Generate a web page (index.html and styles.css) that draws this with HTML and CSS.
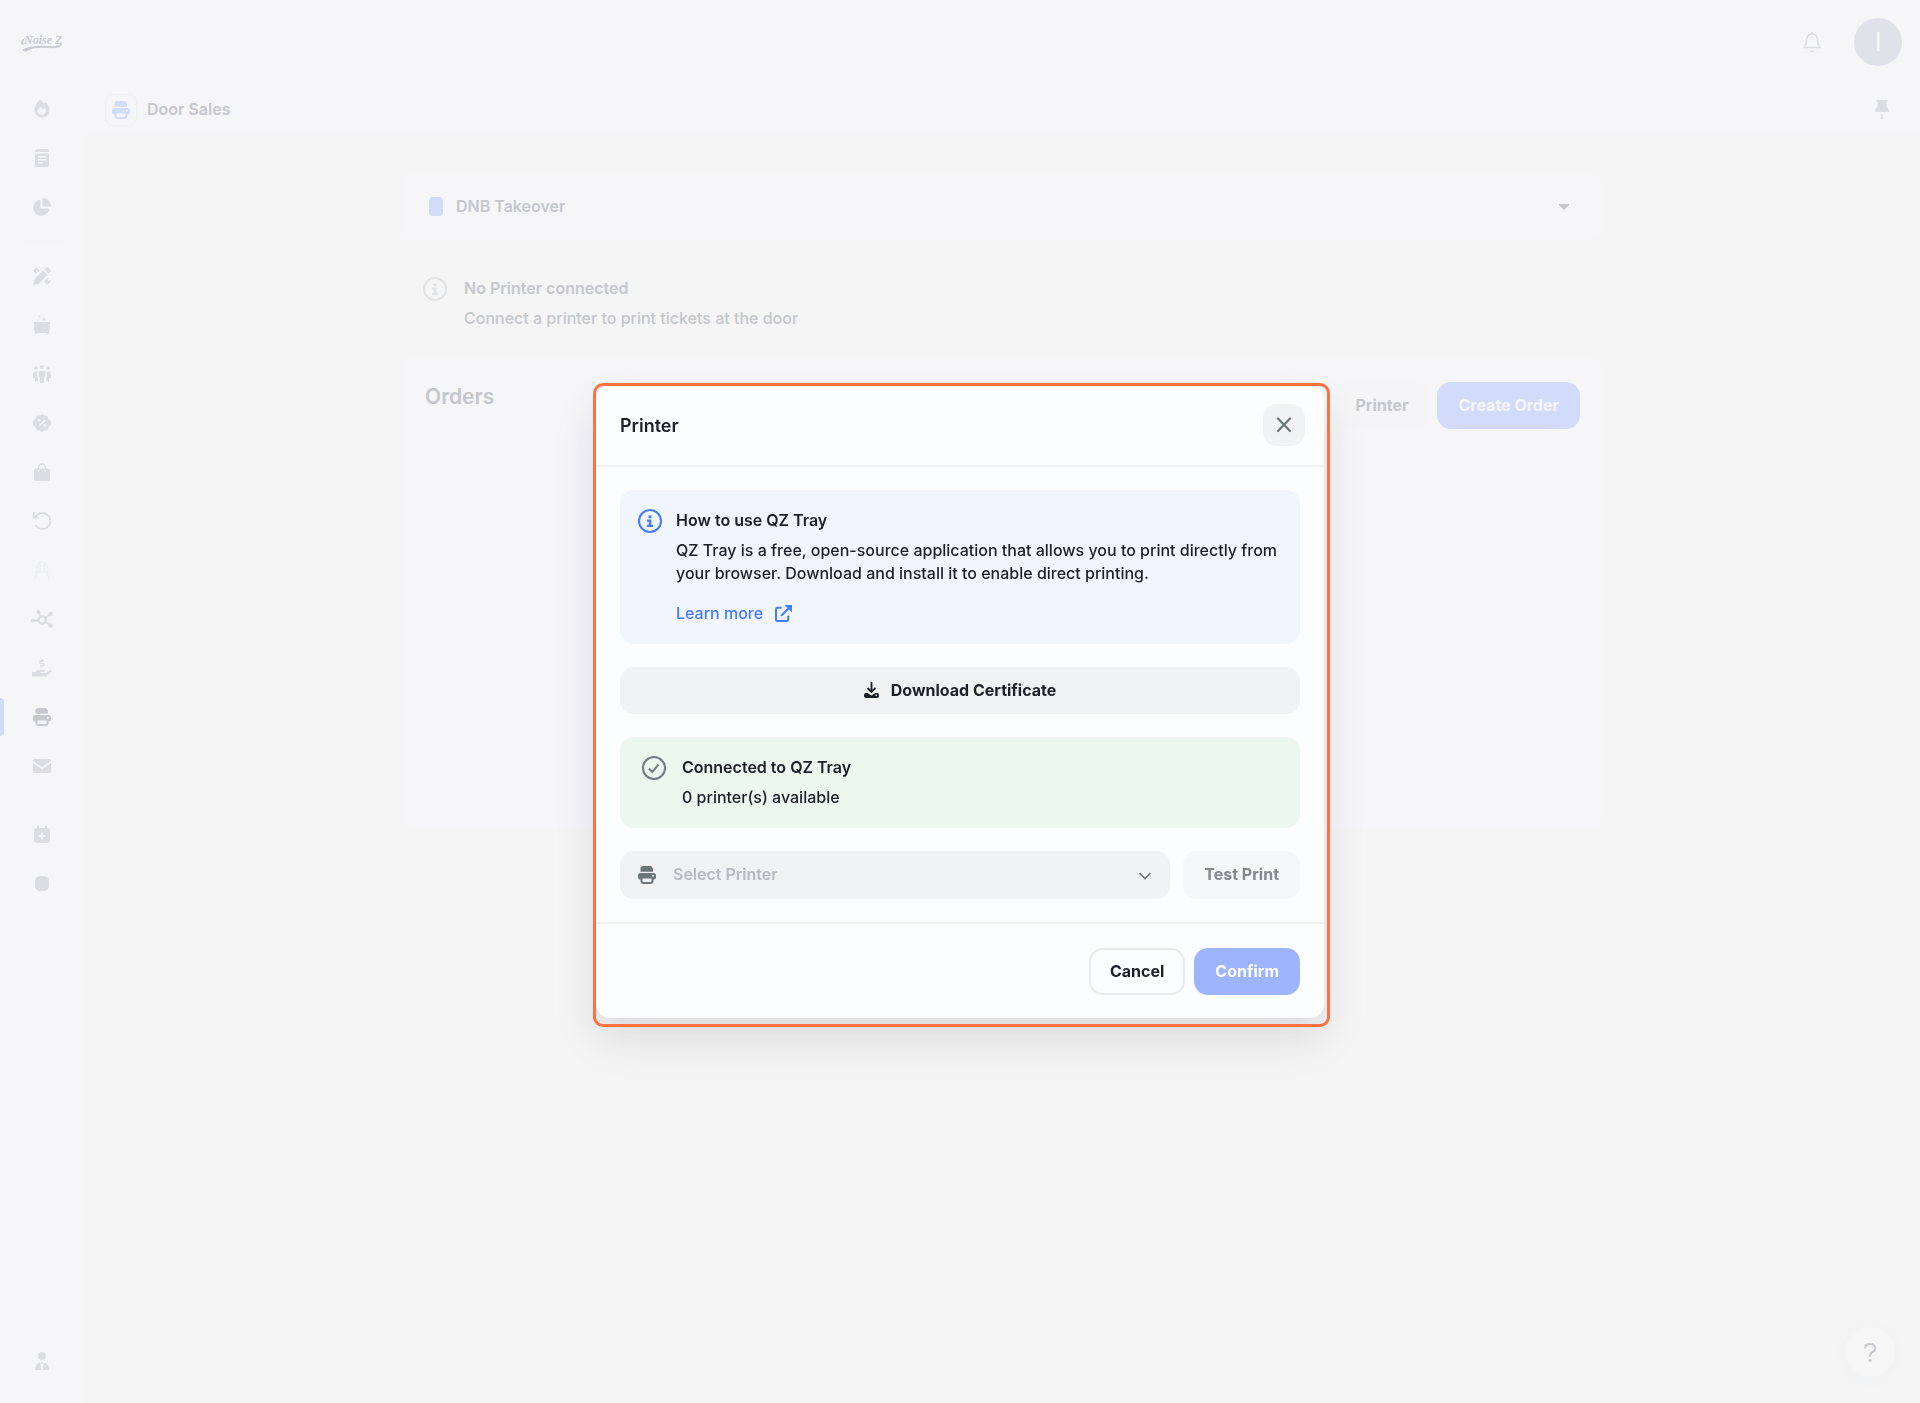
FILE: index.html
```html
<!DOCTYPE html>
<html lang="en">
<head>
  <meta charset="UTF-8" />
  <meta name="viewport" content="width=device-width, initial-scale=1.0"/>
  <title>Door Sales</title>
  <link rel="stylesheet" href="styles.css">
</head>
<body>

  <!-- shared icons -->
  <svg class="sprite" aria-hidden="true">
    <symbol id="i-printer" viewBox="0 0 18 18">
      <path d="M5 0h7.500q1.500 0 2.500 3v2.800H2.500V2.500Q2.500 0 5 0z"/>
      <path fill-rule="evenodd" d="M2.500 7h13Q18 7 18 9.500v2q0 2-2 2h-.5V15q0 3-3 3h-7q-3 0-3-3v-1.500H2q-2 0-2-2v-2Q0 7 2.500 7zM4.500 12.500V15q0 1 1 1h7q1 0 1-1v-2.500zM14 9h2v1.500h-2z"/>
    </symbol>
    <symbol id="i-info" viewBox="0 0 24 24">
      <circle cx="12" cy="12" r="11" fill="none" stroke="currentColor" stroke-width="2"/>
      <path d="M10.500 6.500h3v2.700h-3zM9 10.500h4.300v5.300H15V18H9v-2.200h1.800v-3.100H9z"/>
    </symbol>
  </svg>

  <div class="layout">
    <nav class="sidebar">
      <a href="#" class="logo" aria-label="Noise Z">
        <svg width="44" height="22" viewBox="0 0 44 22">
          <text x="4" y="13" class="logo-text">Noise Z</text>
          <path d="M2 14q-3-4 3-7-3 4-1 6zM2 19q8-5 26-4 13 1 14-4 1 7-12 6-15-1-21 2-4 3-7 0z" fill="#c9cbd0"/>
        </svg>
      </a>

      <a href="#" class="nav-item" aria-label="Dashboard">
        <svg width="16" height="19" viewBox="0 0 18 20"><path fill-rule="evenodd" d="M7 0q3 2 4.500 5L13 3q5 5 4.500 9.500Q16.500 20 9 20 1 19.500.5 12 .5 6 7 0zM8 8q-4 2-4 5.500Q4.500 17 9 17q4.500-.5 4.500-4.500Q13.500 10 12 8.500L10.500 11z"/></svg>
      </a>
      <a href="#" class="nav-item" aria-label="Events">
        <svg width="14" height="18" viewBox="0 0 14 18"><path d="M2 0h10q1.500 0 2 3H0Q.5 0 2 0z"/><path fill-rule="evenodd" d="M0 4.500h14V16q0 2-2 2H2q-2 0-2-2zM3 7v1.500h8V7zm0 3v1.500h8V10zm0 3v1.500h5V13z"/></svg>
      </a>
      <a href="#" class="nav-item" aria-label="Reports">
        <svg width="18" height="18" viewBox="0 0 18 18"><path d="M7.500 1.500V10.500H16.500A8.200 8.200 0 1 1 7.500 1.500zM9.500 0a8.200 8.200 0 0 1 8.500 8.500H9.500z"/></svg>
      </a>

      <hr>

      <a href="#" class="nav-item" aria-label="Design">
        <svg width="18" height="18" viewBox="0 0 18 18"><path d="M0 18l1.500-6L10 3.500 14.500 8 6 16.500zM11.500 2.500L14 0q2 0 4 4l-2.500 2.500zM0 3.500L3.500 0l3.500 3.500-1.500 1.500L3.500 3 2.500 4l2 2L3 7zM11 14.500l4-4 1 1-1.500 1.500 1 1L17 12.500l1 1.500-4 4z"/></svg>
      </a>
      <a href="#" class="nav-item" aria-label="Kitchen">
        <svg width="16" height="20" viewBox="0 0 16 20"><circle cx="5.500" cy="1.500" r="1"/><circle cx="10" cy="4" r="1.500"/><path d="M0 7h16v2l-.5 1q1 4-.5 7.500V19h-2v-1H3v1H1v-1.500Q-.5 14 .5 10L0 9z"/></svg>
      </a>
      <a href="#" class="nav-item" aria-label="Guests">
        <svg width="18" height="18" viewBox="0 0 18 18"><circle cx="3" cy="3" r="1.800"/><circle cx="9" cy="2" r="2"/><circle cx="15" cy="3" r="1.800"/><path d="M6.500 6h5q1 0 1 1.500V12h-1.500v6H7v-6H5.500V7.500Q5.500 6 6.500 6zM2 6.500h2.500q-1 3 0 6l.5 4H2V13H0q-.5-6 2-6.500zM16 6.500h-2.500q1 3 0 6l-.5 4h3V13h2q.5-6-2-6.500z"/></svg>
      </a>
      <a href="#" class="nav-item" aria-label="Discounts">
        <svg width="18" height="18" viewBox="0 0 18 18"><path d="M9 0l2.500 1.500 3 .5.8 2.800L18 7v4l-2.500 2-1 3-3 .5L9 18l-2.500-1.500-3-.5-1-3L0 11V7l2.500-2.200L3.500 2l3-.5z"/><path d="M6 12l6-6" stroke="#f6f6f9" stroke-width="1.500"/><circle cx="6" cy="6.500" r="1.400" fill="#f6f6f9"/><circle cx="12" cy="11.500" r="1.400" fill="#f6f6f9"/></svg>
      </a>
      <a href="#" class="nav-item" aria-label="Shop">
        <svg width="16" height="18" viewBox="0 0 16 18"><path d="M4.500 6V4.500a3.500 3.500 0 0 1 7 0V6" fill="none" stroke="currentColor" stroke-width="1.500"/><path fill-rule="evenodd" d="M2 5.500h12q2 0 2 2V16q0 2-2 2H2q-2 0-2-2V7.500q0-2 2-2zM4 7v1.500h1.500V7zm6.500 0v1.500H12V7z"/></svg>
      </a>
      <a href="#" class="nav-item" aria-label="Refunds">
        <svg width="18" height="18" viewBox="0 0 18 18"><path d="M2.500 5A8 8 0 1 1 2.500 13" fill="none" stroke="currentColor" stroke-width="1.800"/><path d="M0 0h1.800v3.500L6 5v1.500H0z"/></svg>
      </a>
      <a href="#" class="nav-item nav-item-faint" aria-label="Seating">
        <svg width="16" height="18" viewBox="0 0 16 18"><path d="M3 10V6q0-5 5-5t5 5v4M6 10V1.500M10 10V1.500M1 11h14M3 12l-2 6M13 12l2 6" fill="none" stroke="currentColor" stroke-width="1.500"/></svg>
      </a>
      <a href="#" class="nav-item" aria-label="Integrations">
        <svg width="22" height="18" viewBox="0 0 22 18"><path d="M2 10.500h6M7.500 2.500l2.500 5M19 4.500l-5.500 4M19 15l-5.500-4" stroke="currentColor" stroke-width="2"/><circle cx="11.300" cy="10" r="3.700" fill="none" stroke="currentColor" stroke-width="2.500"/><circle cx="2" cy="10.500" r="2"/><circle cx="7.500" cy="2" r="2"/><circle cx="19.500" cy="4" r="2.200"/><circle cx="19.500" cy="15.500" r="2.200"/></svg>
      </a>
      <a href="#" class="nav-item" aria-label="Payouts">
        <svg width="20" height="18" viewBox="0 0 20 18"><path d="M12 2H9.500q-1.500 0-1.500 1.200T9.500 4.500h1q1.500 0 1.500 1.200T10.500 7H8M10 0v2M10 7v1.500" fill="none" stroke="currentColor" stroke-width="1.400"/><path d="M0 13h3q2-2 4-2h5q1.500.5.5 2H9v1h4.500l5-3q2 0 1 1.500L14 17.500H0z"/></svg>
      </a>
      <a href="#" class="nav-item active" aria-label="Door Sales">
        <svg width="18" height="18"><use href="#i-printer"/></svg>
      </a>
      <a href="#" class="nav-item" aria-label="Messages">
        <svg width="18" height="14" viewBox="0 0 18 14"><path d="M1.500 0h15Q18 0 18 2L9 8 0 2Q0 0 1.500 0zM0 4l9 6 9-6v8q0 2-2 2H2q-2 0-2-2z"/></svg>
      </a>

      <hr>

      <a href="#" class="nav-item" aria-label="Add event">
        <svg width="16" height="17" viewBox="0 0 16 17"><path fill-rule="evenodd" d="M3 0h2v2h6V0h2v2q3 0 3 3v9q0 3-3 3H3q-3 0-3-3V5q0-3 3-3zM7 6.500V9H4.500v2H7v2.500h2V11h2.500V9H9V6.500z"/></svg>
      </a>
      <a href="#" class="nav-item" aria-label="More">
        <svg width="14" height="15" viewBox="0 0 14 15"><rect width="14" height="15" rx="5"/></svg>
      </a>

      <a href="#" class="nav-item nav-user" aria-label="Account">
        <svg width="14" height="18" viewBox="0 0 14 18"><circle cx="7" cy="4" r="4"/><path d="M5 10.500Q0 12 0 18h6l-.5-6zM9 10.500q5 1.500 5 7.500H8l.5-6zM6 10h2l-.5 2h-1z"/></svg>
      </a>
    </nav>

    <div class="page">
      <header class="topbar">
        <button class="icon-btn" aria-label="Notifications">
          <svg width="18" height="21" viewBox="0 0 18 21"><path d="M9 0v2M1 15.500q2.500-3 2.500-7.500Q4 2.200 9 2t5.500 6q0 4.500 2.500 7.500z" fill="none" stroke="currentColor" stroke-width="1.600"/><path d="M6.500 18.500h5Q11 20.500 9 20.500t-2.500-2z"/></svg>
        </button>
        <div class="avatar">I</div>
      </header>

      <div class="subheader">
        <span class="page-icon"><svg width="18" height="18"><use href="#i-printer"/></svg></span>
        <h1>Door Sales</h1>
        <button class="icon-btn pin" aria-label="Pin">
          <svg width="14" height="19" viewBox="0 0 14 19"><path d="M1.500 0h11v2H11l.5 4.500Q14 8.500 14 12H0q0-3.500 2.500-5.500L3 2H1.500zM6.200 14h1.600v5H6.200z"/></svg>
        </button>
      </div>

      <main class="content">
        <div class="event-select">
          <span class="event-color"></span>
          <select aria-label="Event">
            <option>DNB Takeover</option>
          </select>
          <svg class="caret" width="10" height="6" viewBox="0 0 10 6"><path d="M0 0h10v1L5 6 0 1z"/></svg>
        </div>

        <div class="notice">
          <svg width="24" height="24"><use href="#i-info"/></svg>
          <div>
            <h2>No Printer connected</h2>
            <p>Connect a printer to print tickets at the door</p>
          </div>
        </div>

        <section class="orders">
          <h2>Orders</h2>
          <div class="orders-actions">
            <button class="btn btn-muted">Printer</button>
            <button class="btn btn-create">Create Order</button>
          </div>
        </section>
      </main>
    </div>
  </div>

  <button class="help" aria-label="Help">
    <svg width="12" height="19" viewBox="0 0 12 19"><path d="M1 5.500Q1.200 1 6 1t5 4.200Q11 8 8.500 9T6 13.500" fill="none" stroke="currentColor" stroke-width="2"/><circle cx="6" cy="17.500" r="1.500"/></svg>
  </button>

  <div class="overlay">
    <div class="modal" role="dialog" aria-labelledby="modal-title">
      <div class="modal-header">
        <h2 id="modal-title">Printer</h2>
        <button class="close" aria-label="Close">
          <svg width="16" height="16" viewBox="0 0 16 16"><path d="M2 1.500l12 12.500M14 1.500L2 14" stroke="currentColor" stroke-width="2.200" stroke-linecap="round"/></svg>
        </button>
      </div>

      <div class="modal-body">
        <div class="alert alert-info">
          <svg width="24" height="24"><use href="#i-info"/></svg>
          <div>
            <h3>How to use QZ Tray</h3>
            <p>QZ Tray is a free, open-source application that allows you to print directly from your browser. Download and install it to enable direct printing.</p>
            <a href="#" class="learn-more">Learn more
              <svg width="17" height="17" viewBox="0 0 18 18"><path d="M7 3H3Q1 3 1 5v10q0 2 2 2h9q2 0 2-2v-3.500M6.500 11.500L15 3" fill="none" stroke="currentColor" stroke-width="2.200"/><path d="M10 0h8v8z"/></svg>
            </a>
          </div>
        </div>

        <button class="btn btn-grey">
          <svg width="15" height="16" viewBox="0 0 15 16"><path d="M7.500 0v9M3.500 6l4 4 4-4" fill="none" stroke="currentColor" stroke-width="1.800"/><path fill-rule="evenodd" d="M2 11h1.500l4 2.500 4-2.500H13q2 0 2 2v1q0 2-2 2H2q-2 0-2-2v-1q0-2 2-2zM11.500 12.800V14H13v-1.200z"/></svg>
          Download Certificate
        </button>

        <div class="alert alert-success">
          <svg width="24" height="24" viewBox="0 0 24 24"><circle cx="12" cy="12" r="11" fill="none" stroke="currentColor" stroke-width="2"/><path d="M7 12.500l3.200 3.500L16.500 8.500" fill="none" stroke="currentColor" stroke-width="2"/></svg>
          <div>
            <h3>Connected to QZ Tray</h3>
            <p>0 printer(s) available</p>
          </div>
        </div>

        <div class="printer-row">
          <div class="printer-select">
            <svg class="select-icon" width="18" height="18"><use href="#i-printer"/></svg>
            <select aria-label="Select Printer">
              <option>Select Printer</option>
            </select>
            <svg class="select-chevron" width="12" height="8" viewBox="0 0 12 8"><path d="M.5 1L6 6.500 11.500 1" fill="none" stroke="currentColor" stroke-width="1.600"/></svg>
          </div>
          <button class="btn btn-test" disabled>Test Print</button>
        </div>
      </div>

      <div class="modal-footer">
        <button class="btn btn-outline">Cancel</button>
        <button class="btn btn-confirm" disabled>Confirm</button>
      </div>
    </div>
  </div>

</body>
</html>
```
FILE: styles.css
```css
* { box-sizing: border-box; }

body {
  margin: 0;
  font-family: Inter, sans-serif;
  font-size: 16px;
  line-height: 23px;
  background: #f5f5f5;
  color: #1b1f26;
}

h1, h2, h3, p {
  margin: 0;
}

h1, h2, h3 {
  font-size: 16px;
  font-weight: 600;
}

svg {
  fill: currentColor;
  flex-shrink: 0;
}

button, select {
  font: inherit;
  color: inherit;
  border: none;
  cursor: pointer;
}

select {
  appearance: none;
  font-weight: 600;
  width: 100%;
}

.sprite {
  display: none;
}

.layout {
  display: flex;
  min-height: 100vh;
}

/* Sidebar */
.sidebar {
  width: 84px;
  flex-shrink: 0;
  display: flex;
  flex-direction: column;
  padding-bottom: 18px;
  background: #f6f6f9;
}

.logo {
  height: 84px;
  display: flex;
  align-items: center;
  justify-content: center;
}

.logo-text {
  font: italic bold 12px "Liberation Serif", serif;
  fill: #c9cbd0;
}

.nav-item {
  height: 49px;
  display: flex;
  align-items: center;
  justify-content: center;
  color: #dcdde0;
}

.nav-item.active {
  color: #c5c9cf;
  position: relative;
}

.nav-item.active::before {
  content: "";
  position: absolute;
  left: 0;
  height: 38px;
  width: 4px;
  border-radius: 0 4px 4px 0;
  background: #d2dbfa;
}

.nav-item-faint {
  color: #eeeff1;
}

.nav-user {
  margin-top: auto;
}

.sidebar hr {
  width: 46px;
  height: 2px;
  margin: 9px auto;
  border: none;
  background: #f5f5f7;
}

/* Page */
.page {
  flex: 1;
  min-width: 0;
}

.topbar {
  height: 84px;
  display: flex;
  align-items: center;
  justify-content: flex-end;
  gap: 33px;
  padding: 0 18px;
  background: #f6f6f9;
}

.icon-btn {
  display: flex;
  padding: 0;
  background: none;
  color: #dcdde0;
}

.avatar {
  width: 48px;
  height: 48px;
  border-radius: 50%;
  background: #e1e1ea;
  color: #f8f8fa;
  font-size: 25px;
  line-height: 48px;
  text-align: center;
}

.subheader {
  height: 50px;
  display: flex;
  align-items: center;
  gap: 10px;
  padding: 0 31px 0 21px;
  border-top: 1px solid #f5f5f6;
  background: #f6f6f9;
  color: #c5c7cb;
}

.page-icon {
  width: 32px;
  height: 32px;
  display: flex;
  align-items: center;
  justify-content: center;
  border: 1px solid #eff0f3;
  border-radius: 8px;
  color: #d2dbfa;
}

.pin {
  margin-left: auto;
}

.content {
  max-width: 1200px;
  margin: 40px auto;
  color: #c5c7cb;
}

.event-select {
  position: relative;
}

.event-select select {
  height: 65px;
  padding: 0 54px;
  border-radius: 12px;
  background: #f6f6f9;
}

.event-color {
  position: absolute;
  left: 27px;
  top: 23px;
  width: 14px;
  height: 19px;
  border-radius: 4px;
  background: #d2dbfa;
}

.caret {
  position: absolute;
  right: 33px;
  top: 30px;
  pointer-events: none;
}

.notice {
  display: flex;
  gap: 17px;
  padding: 38px 21px 28px;
}

.notice svg {
  color: #e1e2e4;
}

.notice p,
.alert p {
  margin-top: 7px;
  font-weight: 500;
}

.orders {
  min-height: 470px;
  display: flex;
  justify-content: space-between;
  align-items: flex-start;
  padding: 24px 22px 24px 23px;
  border-radius: 12px;
  background: #f6f6f9;
}

.orders h2 {
  font-size: 21px;
  line-height: 30px;
}

.orders-actions {
  display: flex;
  gap: 8px;
}

/* Buttons */
.btn {
  height: 47px;
  display: flex;
  align-items: center;
  justify-content: center;
  gap: 12px;
  padding: 0 21px 1px;
  border-radius: 14px;
  font-weight: 700;
}

.btn-muted {
  background: #f5f5f7;
}

.btn-create {
  background: #d2dbfa;
  color: #f6f6f9;
}

.btn-grey {
  background: #f1f2f4;
}

.btn-test {
  height: 48px;
  background: #f6f7f8;
  color: #82888c;
}

.btn-outline {
  padding: 0 19px 1px;
  border: 2px solid #e9eaec;
  background: #fcfdff;
}

.btn-confirm {
  background: #9db5ff;
  color: #fcfdff;
}

.help {
  position: fixed;
  right: 25px;
  bottom: 26px;
  width: 50px;
  height: 50px;
  display: flex;
  align-items: center;
  justify-content: center;
  border-radius: 50%;
  background: #f6f6f7;
  color: #c5c7cb;
  box-shadow: 0 2px 12px #eff0f3;
}

/* Modal */
.overlay {
  position: fixed;
  inset: 0;
  display: flex;
  align-items: center;
  justify-content: center;
  padding-top: 1px;
}

.modal {
  position: relative;
  width: 728px;
  border-radius: 14px;
  background: #fcfdff;
  box-shadow: 0 20px 44px rgba(30, 30, 50, 0.12);
}

.modal::after {
  content: "";
  position: absolute;
  inset: -3px -6px -9px -3px;
  border: 3px solid #ff7140;
  border-radius: 10px;
  pointer-events: none;
}

.modal-header {
  display: flex;
  align-items: center;
  justify-content: space-between;
  padding: 18px 19px 19px 24px;
  border-bottom: 2px solid #f1f2f4;
}

.modal-header h2 {
  font-size: 18px;
}

.close {
  width: 42px;
  height: 42px;
  display: flex;
  align-items: center;
  justify-content: center;
  padding: 0;
  border-radius: 14px;
  background: #f1f2f4;
  color: #6c7679;
}

.modal-body {
  display: flex;
  flex-direction: column;
  gap: 23px;
  padding: 23px 24px;
}

.alert {
  display: flex;
  padding: 19px;
  border-radius: 14px;
}

.alert-info {
  gap: 14px;
  padding-left: 18px;
  background: #f1f5fe;
}

.alert-info > svg,
.learn-more {
  color: #467cff;
}

.learn-more {
  display: inline-flex;
  align-items: center;
  gap: 12px;
  margin-top: 17px;
  font-weight: 500;
  text-decoration: none;
}

.alert-success {
  gap: 16px;
  padding-left: 22px;
  background: #ebf7ef;
}

.alert-success > svg {
  color: #737b80;
}

.printer-row {
  display: flex;
  gap: 13px;
}

.printer-select {
  position: relative;
  flex: 1;
  color: #6c7679;
}

.printer-select select {
  height: 48px;
  padding: 0 53px 1px;
  border-radius: 14px;
  background: #f1f2f4;
  color: #b6b9be;
}

.select-icon,
.select-chevron {
  position: absolute;
  pointer-events: none;
}

.select-icon {
  left: 18px;
  top: 15px;
}

.select-chevron {
  right: 19px;
  top: 21px;
}

.modal-footer {
  display: flex;
  justify-content: flex-end;
  gap: 9px;
  padding: 24px 24px 23px;
  border-top: 2px solid #f1f2f4;
}
```
